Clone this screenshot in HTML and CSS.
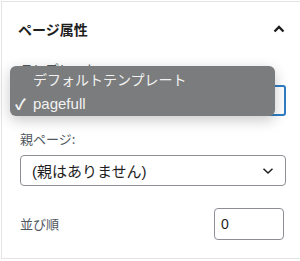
FILE: index.html
```html
<!DOCTYPE html>
<html lang="ja">
<head>
    <meta charset="UTF-8">
    <meta name="viewport" content="width=device-width, initial-scale=1.0">
    <title>ページ属性</title>
    <link rel="stylesheet" href="styles.css">
</head>
<body>
    <div class="panel">
        <div class="panel-header">
            <h2 class="panel-title">ページ属性</h2>
            <svg class="toggle" width="12" height="8" viewBox="0 0 12 8">
                <polyline points="1.5,6.5 6,2 10.5,6.5" fill="none" stroke="#1e1e1e" stroke-width="2.4"/>
            </svg>
        </div>

        <div class="panel-body">
            <label class="field-label">テンプレート:</label>
            <div class="select select-focus"></div>

            <label class="field-label">親ページ:</label>
            <div class="select">
                <span>(親はありません)</span>
                <svg width="12" height="8" viewBox="0 0 12 8">
                    <polyline points="1.5,1.8 6,6 10.5,1.8" fill="none" stroke="#1e1e1e" stroke-width="1.5"/>
                </svg>
            </div>

            <div class="order-row">
                <label class="field-label">並び順</label>
                <div class="number-input">0</div>
            </div>
        </div>

        <ul class="dropdown">
            <li><span class="check"></span>デフォルトテンプレート</li>
            <li><span class="check">&#10003;</span><span class="latin">pagefull</span></li>
        </ul>
    </div>
</body>
</html>
```

FILE: styles.css
```css
body {
    margin: 0;
    background-color: #fff;
    font-family: 'Liberation Sans', 'Noto Sans CJK JP', sans-serif;
    color: #1e1e1e;
}

.panel {
    position: relative;
    width: 299px;
    height: 256px;
    margin: 1px 0 0 1px;
    border-top: 1px solid #e4e4e4;
    border-left: 1px solid #e4e4e4;
    border-bottom: 1px solid #e4e4e4;
}

.panel-header {
    display: flex;
    align-items: center;
    justify-content: space-between;
    height: 54px;
    padding: 0 16px 0 16px;
}

.panel-title {
    margin: 0;
    font-size: 14px;
    font-weight: bold;
    font-family: 'Noto Sans CJK JP', sans-serif;
}

.panel-body {
    padding: 4px 15px 0 18px;
}

.field-label {
    display: block;
    font-size: 13px;
    line-height: 18px;
    color: #50575e;
    font-family: 'Noto Sans CJK JP', sans-serif;
}

.select {
    display: flex;
    align-items: center;
    justify-content: space-between;
    box-sizing: border-box;
    height: 31px;
    margin: 7px 0 14px;
    padding: 0 11px 0 11px;
    border: 1px solid #8c8f94;
    border-radius: 4px;
    font-size: 15px;
}

.select-focus {
    border: 2px solid #2f7dc4;
    border-radius: 3px;
}

.order-row {
    display: flex;
    align-items: center;
    justify-content: space-between;
    margin-top: 22px;
}

.number-input {
    box-sizing: border-box;
    width: 70px;
    height: 32px;
    margin-right: 2px;
    padding: 0 6px;
    border: 1px solid #8c8f94;
    border-radius: 4px;
    font-size: 14px;
    line-height: 30px;
}

.dropdown {
    position: absolute;
    top: 64px;
    left: 8px;
    width: 265px;
    height: 50px;
    margin: 0;
    padding: 0;
    list-style: none;
    box-sizing: border-box;
    background-color: #7b7c7d;
    border-radius: 6px;
    box-shadow: 0 4px 14px rgba(0, 0, 0, 0.22);
    color: #f2f2f2;
    font-size: 14px;
}

.dropdown li {
    display: flex;
    align-items: center;
    height: 25px;
    padding-left: 5px;
}

.dropdown .latin {
    font-size: 15px;
}

.check {
    display: inline-block;
    width: 18px;
    font-size: 15px;
    font-weight: bold;
}
```
